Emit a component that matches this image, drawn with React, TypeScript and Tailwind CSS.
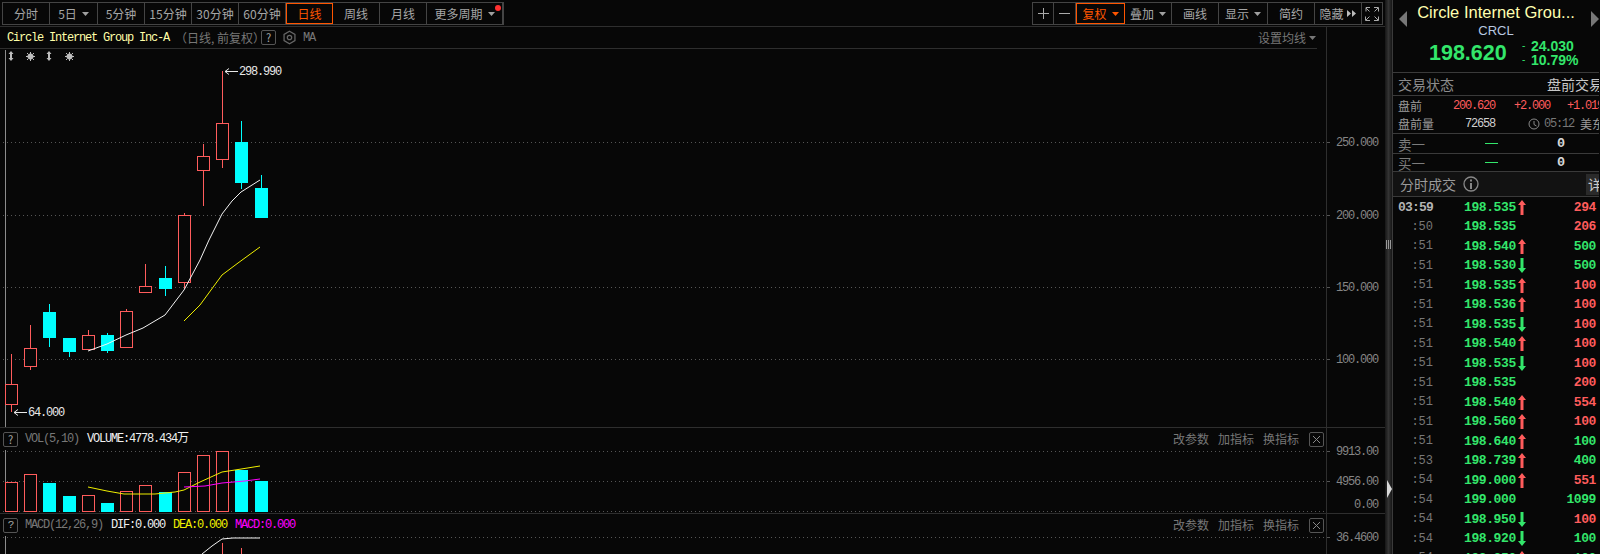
import React from 'react';

const RED = '#ff5c5c';
const CYAN = '#00ffff';
const MONO = '"Liberation Mono", "Noto Sans CJK SC", monospace';

const leftTabs = [
  { label: '分时', w: 'w-[47px]' },
  { label: '5日', w: 'w-[48px]', caret: true },
  { label: '5分钟', w: 'w-[47px]' },
  { label: '15分钟', w: 'w-[47px]' },
  { label: '30分钟', w: 'w-[47px]' },
  { label: '60分钟', w: 'w-[47px]' },
  { label: '日线', w: 'w-[47px]', active: true },
  { label: '周线', w: 'w-[47px]' },
  { label: '月线', w: 'w-[47px]' },
  { label: '更多周期', w: 'w-[76px]', caret: true, dot: true },
];

const rightTabs = [
  { label: '复权', w: 'w-[49px]', caret: true, active: true },
  { label: '叠加', w: 'w-[47px]', caret: true },
  { label: '画线', w: 'w-[47px]' },
  { label: '显示', w: 'w-[49px]', caret: true },
  { label: '简约', w: 'w-[47px]' },
];

// x = left edge of the 13px body
const candles = [
  { x: 5, up: true, top: 384, bot: 404, hi: 354, lo: 412 },
  { x: 24, up: true, top: 348, bot: 366, hi: 325, lo: 370 },
  { x: 43, up: false, top: 312, bot: 337, hi: 304, lo: 347 },
  { x: 63, up: false, top: 338, bot: 351, hi: 338, lo: 357 },
  { x: 82, up: true, top: 335, bot: 349, hi: 330, lo: 349 },
  { x: 101, up: false, top: 335, bot: 350, hi: 333, lo: 353 },
  { x: 120, up: true, top: 311, bot: 347, hi: 309, lo: 347 },
  { x: 139, up: true, top: 286, bot: 292, hi: 264, lo: 293 },
  { x: 159, up: false, top: 278, bot: 288, hi: 266, lo: 296 },
  { x: 178, up: true, top: 215, bot: 282, hi: 213, lo: 289 },
  { x: 197, up: true, top: 156, bot: 170, hi: 144, lo: 206 },
  { x: 216, up: true, top: 123, bot: 159, hi: 71, lo: 168 },
  { x: 235, up: false, top: 142, bot: 182, hi: 121, lo: 189 },
  { x: 255, up: false, top: 188, bot: 217, hi: 175, lo: 218 },
];

const volumes = [482, 474, 483, 496, 495, 503, 491, 485, 492, 472, 455, 451, 470, 481];

const ma5 = '88,351 107,344 126,335 143,328 165,315 184,290 200,260 209,240 222,214 232,201 241,192 260,180';
const ma10 = '184,321 200,305 222,275 238,263 260,247';
const volMa5 = '88,487 107,491 124,494 155,494 175,492 184,490 200,482 222,472 235,470 260,466';
const volMa10 = '184,487 205,486 222,483 245,481 260,479';

const ticks = [
  { time: '03:59', price: '198.535', dir: 'up', vol: '294', red: true },
  { time: ':50', price: '198.535', dir: '', vol: '206', red: true },
  { time: ':51', price: '198.540', dir: 'up', vol: '500', red: false },
  { time: ':51', price: '198.530', dir: 'down', vol: '500', red: false },
  { time: ':51', price: '198.535', dir: 'up', vol: '100', red: true },
  { time: ':51', price: '198.536', dir: 'up', vol: '100', red: true },
  { time: ':51', price: '198.535', dir: 'down', vol: '100', red: true },
  { time: ':51', price: '198.540', dir: 'up', vol: '100', red: true },
  { time: ':51', price: '198.535', dir: 'down', vol: '100', red: true },
  { time: ':51', price: '198.535', dir: '', vol: '200', red: true },
  { time: ':51', price: '198.540', dir: 'up', vol: '554', red: true },
  { time: ':51', price: '198.560', dir: 'up', vol: '100', red: true },
  { time: ':51', price: '198.640', dir: 'up', vol: '100', red: false },
  { time: ':53', price: '198.739', dir: 'up', vol: '400', red: false },
  { time: ':54', price: '199.000', dir: 'up', vol: '551', red: true },
  { time: ':54', price: '199.000', dir: '', vol: '1099', red: false },
  { time: ':54', price: '198.950', dir: 'down', vol: '100', red: true },
  { time: ':54', price: '198.920', dir: 'down', vol: '100', red: false },
  { time: ':54', price: '198.850', dir: 'up', vol: '100', red: false },
];

const Caret = ({ color = '#a0a0a0' }: { color?: string }) => (
  <svg width="7" height="4" viewBox="0 0 7 4" className="shrink-0">
    <path d="M0 0h7L3.5 4z" fill={color} />
  </svg>
);

const Tab = ({ tab }: { tab: { label: string; w: string; caret?: boolean; active?: boolean; dot?: boolean } }) => (
  <div
    className={`relative flex h-full items-center justify-center gap-[5px] border-r text-[12px] ${tab.w} ${
      tab.active ? 'border border-[#ff5500] text-[#ff5500]' : 'border-[#444] text-[#a6a6a6]'
    }`}
  >
    <span>{tab.label}</span>
    {tab.caret && <Caret color={tab.active ? '#ff5500' : '#a0a0a0'} />}
    {tab.dot && <span className="absolute right-[1px] top-[2px] h-[6px] w-[6px] rounded-full bg-[#ff3030]" />}
  </div>
);

const HelpBox = () => (
  <span className="flex h-[15px] w-[15px] shrink-0 items-center justify-center rounded-[2px] border border-[#555] text-[11px] text-[#aaa]">?</span>
);

const PanelActions = () => (
  <div className="flex items-center text-[12px] text-[#777]">
    <span className="mr-[9px]">改参数</span>
    <span className="mr-[9px]">加指标</span>
    <span className="mr-[10px]">换指标</span>
    <span className="flex h-[15px] w-[15px] items-center justify-center rounded-[2px] border border-[#555]">
      <svg width="9" height="9" viewBox="0 0 9 9">
        <path d="M1 1l7 7M8 1L1 8" stroke="#888" strokeWidth="1" />
      </svg>
    </span>
  </div>
);

const Dotted = ({ y, x2 = 1326 }: { y: number; x2?: number }) => (
  <line x1={3} x2={x2} y1={y + 0.5} y2={y + 0.5} stroke="#555" strokeDasharray="1 3" shapeRendering="crispEdges" />
);

const Axis = ({ top, height, labels }: { top: number; height: number; labels: { y: number; text: string; tick?: boolean }[] }) => (
  <svg width={57} height={height} viewBox={`1327 ${top} 57 ${height}`} className="shrink-0">
    {labels.map(l => (
      <g key={l.text}>
        {l.tick !== false && <line x1={1327} x2={1330} y1={l.y + 0.5} y2={l.y + 0.5} stroke="#555" shapeRendering="crispEdges" />}
        <text x={1378} y={l.y + 4} textAnchor="end" fontFamily={MONO} fontSize="12" letterSpacing="-1.2" fill="#858585">
          {l.text}
        </text>
      </g>
    ))}
  </svg>
);

const PriceChart = () => (
  <svg width={1326} height={378} viewBox="0 49 1326 378" className="block">
    {[142, 215, 287, 359].map(y => (
      <Dotted key={y} y={y} />
    ))}
    <rect x={5} y={50} width={1} height={377} fill="#8c8c8c" />
    {/* top-left markers */}
    {[11, 49].map(x => (
      <path key={x} d={`M${x} 51l2.5 3h-1.5v4h1.5l-2.5 3-2.5-3h1.5v-4h-1.5z`} fill="#bdbdbd" />
    ))}
    {[30, 69].map(x => (
      <g key={x} fill="#bdbdbd">
        <circle cx={x + 0.5} cy={56.5} r={3} />
        <path d={`M${x} 52h1v9h-1zM${x - 4} 56h9v1h-9z`} />
        <path d={`M${x - 3} 53h1v1h-1zM${x + 3} 53h1v1h-1zM${x - 3} 59h1v1h-1zM${x + 3} 59h1v1h-1z`} />
      </g>
    ))}
    <g shapeRendering="crispEdges">
      {candles.map(c => {
        const color = c.up ? RED : CYAN;
        const mid = c.x + 6.5;
        return (
          <g key={c.x}>
            <line x1={mid} x2={mid} y1={c.hi} y2={c.lo} stroke={color} />
            {c.up ? (
              <rect x={c.x + 0.5} y={c.top + 0.5} width={12} height={c.bot - c.top} fill="#070707" stroke={color} />
            ) : (
              <rect x={c.x} y={c.top} width={13} height={c.bot - c.top + 1} fill={color} />
            )}
          </g>
        );
      })}
    </g>
    <polyline points={ma5} fill="none" stroke="#f2f2f2" strokeWidth="1" />
    <polyline points={ma10} fill="none" stroke="#f0f000" strokeWidth="1" />
    <g stroke="#e8e8e8" fill="none">
      <path d="M225 71.5h13M229 68.5l-4 3 4 3" />
      <path d="M14 412.5h13M18 409.5l-4 3 4 3" />
    </g>
    <text x={239} y={75} fontFamily={MONO} fontSize="12" letterSpacing="-1.2" fill="#e8e8e8">298.990</text>
    <text x={28} y={416} fontFamily={MONO} fontSize="12" letterSpacing="-1.2" fill="#e8e8e8">64.000</text>
  </svg>
);

const VolumeChart = () => (
  <svg width={1326} height={63} viewBox="0 450 1326 63" className="block">
    <Dotted y={451} />
    <Dotted y={481} />
    <Dotted y={511} />
    <rect x={5} y={450} width={1} height={62} fill="#8c8c8c" />
    <g shapeRendering="crispEdges">
      {candles.map((c, i) =>
        c.up ? (
          <rect key={c.x} x={c.x + 0.5} y={volumes[i] + 0.5} width={12} height={511 - volumes[i]} fill="#070707" stroke={RED} />
        ) : (
          <rect key={c.x} x={c.x} y={volumes[i]} width={13} height={512 - volumes[i]} fill={CYAN} />
        ),
      )}
    </g>
    <polyline points={volMa5} fill="none" stroke="#f0f000" />
    <polyline points={volMa10} fill="none" stroke="#ff00ff" />
  </svg>
);

const MacdChart = () => (
  <svg width={1326} height={18} viewBox="0 536 1326 18" className="block">
    <Dotted y={537} />
    <rect x={5} y={536} width={1} height={18} fill="#8c8c8c" />
    <polyline points="202,554 212,546 222,539 233,538 260,538" fill="none" stroke="#f2f2f2" />
    <g stroke={RED} shapeRendering="crispEdges">
      <line x1={222.5} x2={222.5} y1={543} y2={554} />
      <line x1={241.5} x2={241.5} y1={548} y2={554} />
    </g>
  </svg>
);

const TickArrow = ({ dir }: { dir: string }) => {
  if (dir === 'up') {
    return (
      <svg width="8" height="15" viewBox="0 0 8 15" className="shrink-0">
        <path d="M4 0l4 5H5.500v10h-3V5H0z" fill={RED} />
      </svg>
    );
  }
  if (dir === 'down') {
    return (
      <svg width="8" height="15" viewBox="0 0 8 15" className="shrink-0">
        <path d="M4 15l4-5H5.500V0h-3v10H0z" fill="#33e66b" />
      </svg>
    );
  }
  return <span className="w-[8px] shrink-0" />;
};

const SideRow = ({ className, children }: { className: string; children: React.ReactNode }) => (
  <div className={`flex shrink-0 items-center whitespace-nowrap border-b border-[#3a3a3a] ${className}`}>{children}</div>
);

const QuotePanel = () => (
  <div className="flex w-[207px] shrink-0 flex-col overflow-hidden border-l border-[#3a3a3a] bg-[#070707]">
    <div className="relative flex h-[73px] shrink-0 flex-col items-center border-b border-[#3a3a3a]">
      <svg width="8" height="16" viewBox="0 0 8 16" className="absolute left-[6px] top-[11px]">
        <path d="M8 0v16L0 8z" fill="#777" />
      </svg>
      <svg width="8" height="16" viewBox="0 0 8 16" className="absolute right-0 top-[11px]">
        <path d="M0 0v16l8-8z" fill="#777" />
      </svg>
      <div className="pt-[2px] font-['Liberation_Sans',sans-serif] text-[16.5px] leading-[20px] text-[#ffffb0]">Circle Internet Grou...</div>
      <div className="mt-[1px] font-['Liberation_Sans',sans-serif] text-[13px] leading-[15px] text-[#b8c8e0]">CRCL</div>
      <div className="mt-[1px] flex items-center self-start pl-[36px]">
        <span className="w-[93px] font-['Liberation_Sans',sans-serif] text-[21.5px] font-bold leading-[28px] text-[#33e66b]">198.620</span>
        <div className="flex flex-col text-[#33e66b]">
          {['24.030', '10.79%'].map(v => (
            <div key={v} className="flex w-[60px] items-center font-['Liberation_Sans',sans-serif] text-[14px] font-bold leading-[14px]">
              <span className="w-[9px] text-[10px] font-normal">-</span>
              <span>{v}</span>
            </div>
          ))}
        </div>
      </div>
    </div>
    <SideRow className="h-[23px] justify-between pl-[5px] text-[14px] text-[#8c8c8c]">
      <span>交易状态</span>
      <span className="mr-[-4px] text-[#c8c8c8]">盘前交易</span>
    </SideRow>
    <div className="flex h-[38px] shrink-0 flex-col border-b border-[#3a3a3a] pl-[5px] text-[12px] leading-[18px]">
      <div className="flex h-[20px] items-center whitespace-nowrap text-[#9a9a9a]">
        <span className="w-[55px] shrink-0">盘前</span>
        <span className="w-[61px] shrink-0" style={{ fontFamily: MONO, letterSpacing: '-1.2px', color: RED }}>200.620</span>
        <span className="w-[53px] shrink-0" style={{ fontFamily: MONO, letterSpacing: '-1.2px', color: RED }}>+2.000</span>
        <span className="shrink-0" style={{ fontFamily: MONO, letterSpacing: '-1.2px', color: RED }}>+1.019</span>
      </div>
      <div className="flex h-[18px] items-center whitespace-nowrap text-[#9a9a9a]">
        <span className="w-[67px] shrink-0">盘前量</span>
        <span className="w-[63px] shrink-0 text-[#d0d0d0]" style={{ fontFamily: MONO, letterSpacing: '-1.2px' }}>72658</span>
        <svg width="12" height="12" viewBox="0 0 12 12" className="mr-[4px] shrink-0">
          <circle cx="6" cy="6" r="5" fill="none" stroke="#888" />
          <path d="M6 3v3.500l2.500 1.500" fill="none" stroke="#888" />
        </svg>
        <span className="mr-[6px] shrink-0 text-[#777]" style={{ fontFamily: MONO, letterSpacing: '-1.2px' }}>05:12</span>
        <span className="shrink-0">美东</span>
      </div>
    </div>
    {['卖一', '买一'].map((label, i) => (
      <SideRow key={label} className={`${i === 0 ? 'h-[20px]' : 'h-[18px]'} pl-[5px] text-[13.5px] leading-[16px] text-[#7c7c7c]`}>
        <span className="w-[87px] shrink-0">{label}</span>
        <span className="h-[1px] w-[13px] shrink-0 bg-[#33e66b]" />
        <span className="ml-[59px] text-[#d8d8d8]" style={{ fontFamily: MONO, fontWeight: 700 }}>0</span>
      </SideRow>
    ))}
    <SideRow className="h-[25px] bg-[#121212] pl-[7px] text-[14px] text-[#9a9a9a]">
      <span className="w-[63px] shrink-0">分时成交</span>
      <svg width="16" height="16" viewBox="0 0 16 16" className="shrink-0">
        <circle cx="8" cy="8" r="7" fill="none" stroke="#888" strokeWidth="1.300" />
        <path d="M7 3.500h2v2H7zM7 7h2v6H7z" fill="#888" />
      </svg>
      <span className="ml-[107px] shrink-0 bg-[#2a2a2a] pl-[2px] text-[#c8c8c8]">详</span>
    </SideRow>
    <div className="flex flex-col pt-[0.5px]" style={{ fontFamily: MONO }}>
      {ticks.map((row, i) => (
        <div key={i} className="flex h-[19.5px] shrink-0 items-center pr-[3px]">
          <span className={`w-[40px] text-right ${i === 0 ? 'text-[13px] font-bold tracking-[-0.8px] text-[#b4b4b4]' : 'text-[12px] text-[#777]'}`}>{row.time}</span>
          <span className="ml-[31px] w-[52px] text-[13px] font-bold tracking-[-0.4px] text-[#33e66b]">{row.price}</span>
          <span className="ml-[1px] flex w-[10px] justify-center">
            <TickArrow dir={row.dir} />
          </span>
          <span className={`ml-auto text-[13px] font-bold tracking-[-0.4px] ${row.red ? 'text-[#ff5c5c]' : 'text-[#33e66b]'}`}>{row.vol}</span>
        </div>
      ))}
    </div>
  </div>
);

const App: React.FC = () => {
  return (
    <div className="flex h-[554px] w-[1600px] overflow-hidden bg-[#070707] font-['Noto_Sans_CJK_SC',sans-serif]">
      <div className="flex w-[1385px] shrink-0 flex-col">
        {/* toolbar */}
        <div className="flex h-[27px] shrink-0 justify-between border-b border-[#2e2e2e] pl-[2px] pr-[2px] pt-[2px]">
          <div className="mb-[1px] flex border border-[#444]">
            {leftTabs.map(tab => (
              <Tab key={tab.label} tab={tab} />
            ))}
          </div>
          <div className="mb-[1px] flex border border-[#444]">
            <div className="flex h-full w-[21px] items-center justify-center border-r border-[#444]">
              <svg width="11" height="11" viewBox="0 0 11 11">
                <path d="M5 0h1v11H5zM0 5h11v1H0z" fill="#aaa" />
              </svg>
            </div>
            <div className="flex h-full w-[22px] items-center justify-center border-r border-[#444]">
              <span className="h-[1px] w-[11px] bg-[#aaa]" />
            </div>
            {rightTabs.map(tab => (
              <Tab key={tab.label} tab={tab} />
            ))}
            <div className="flex w-[47px] items-center justify-center gap-[3px] border-r border-[#444] text-[12px] text-[#a6a6a6]">
              <span>隐藏</span>
              <svg width="10" height="7" viewBox="0 0 10 7">
                <path d="M0 0l4 3.500L0 7zM5 0l4 3.500L5 7z" fill="#bbb" />
              </svg>
            </div>
            <div className="flex w-[20px] items-center justify-center">
              <svg width="14" height="14" viewBox="0 0 14 14" fill="none" stroke="#aaa">
                <path d="M1 4.500V.5h4M9 .5h4.500v4M13.500 9.500v4H9M5 13.500H.5V9.500M1 1l3.500 3.500M13 1L9.500 4.500M13 13L9.500 9.500M1 13l3.500-3.500" />
              </svg>
            </div>
          </div>
        </div>

        {/* price panel */}
        <div className="flex h-[401px] shrink-0 border-b border-[#2e2e2e]">
          <div className="w-[1327px] shrink-0 border-r border-[#2e2e2e]">
            <div className="mr-[9px] flex h-[22px] items-center justify-between border-b border-[#2e2e2e] pl-[7px] pr-[1px] text-[12px]">
              <div className="flex items-center gap-[6px]">
                <span className="text-[#ffffa8]" style={{ fontFamily: MONO, letterSpacing: '-1.2px' }}>Circle Internet Group Inc-A</span>
                <span className="w-[80px] shrink-0 whitespace-nowrap text-[#777]">（日线, 前复权）</span>
                <HelpBox />
                <svg width="15" height="15" viewBox="0 0 24 24" fill="none" stroke="#666" strokeWidth="2">
                  <path d="M12 2l8.700 5v10L12 22l-8.700-5V7z" />
                  <circle cx="12" cy="12" r="3.500" />
                </svg>
                <span className="text-[#777]" style={{ fontFamily: MONO, letterSpacing: '-1.2px' }}>MA</span>
              </div>
              <div className="flex items-center gap-[3px] text-[#777]">
                <span>设置均线</span>
                <Caret color="#777" />
              </div>
            </div>
            <PriceChart />
          </div>
          <Axis
            top={27}
            height={400}
            labels={[
              { y: 142, text: '250.000' },
              { y: 215, text: '200.000' },
              { y: 287, text: '150.000' },
              { y: 359, text: '100.000' },
            ]}
          />
        </div>

        {/* volume panel */}
        <div className="flex h-[86px] shrink-0 border-b border-[#2e2e2e]">
          <div className="w-[1327px] shrink-0 border-r border-[#2e2e2e]">
            <div className="flex h-[22px] items-center justify-between pl-[3px] pr-[2px] text-[12px]">
              <div className="flex items-center">
                <HelpBox />
                <span className="ml-[7px] w-[62px] text-[#777]" style={{ fontFamily: MONO, letterSpacing: '-1.2px' }}>VOL(5,10)</span>
                <span className="text-[#f0f0f0]" style={{ fontFamily: MONO, letterSpacing: '-1.2px' }}>VOLUME:4778.434万</span>
              </div>
              <PanelActions />
            </div>
            <VolumeChart />
          </div>
          <Axis
            top={428}
            height={85}
            labels={[
              { y: 451, text: '9913.00' },
              { y: 481, text: '4956.00' },
              { y: 504, text: '0.00', tick: false },
            ]}
          />
        </div>

        {/* macd panel */}
        <div className="flex min-h-0 flex-1">
          <div className="w-[1327px] shrink-0 border-r border-[#2e2e2e]">
            <div className="flex h-[22px] items-center justify-between pl-[3px] pr-[2px] text-[12px]">
              <div className="flex items-center" style={{ fontFamily: MONO, letterSpacing: '-1.2px' }}>
                <HelpBox />
                <span className="ml-[7px] w-[86px] text-[#777]">MACD(12,26,9)</span>
                <span className="w-[62px] text-[#f0f0f0]">DIF:0.000</span>
                <span className="w-[62px] text-[#f0f000]">DEA:0.000</span>
                <span className="text-[#ff00ff]">MACD:0.000</span>
              </div>
              <PanelActions />
            </div>
            <MacdChart />
          </div>
          <Axis top={514} height={40} labels={[{ y: 537, text: '36.4600' }]} />
        </div>
      </div>

      {/* splitter */}
      <div className="flex w-[7px] shrink-0 flex-col items-center bg-gradient-to-r from-[#161616] via-[#333] to-[#161616] pt-[240px]">
        <div className="h-[9px] w-[5px] bg-[repeating-linear-gradient(90deg,#999_0,#999_1px,transparent_1px,transparent_2px)]" />
        <svg width="5" height="18" viewBox="0 0 5 18" className="ml-[1px] mt-[231px]">
          <path d="M0 0l5 9-5 9z" fill="#d8d8d8" />
        </svg>
      </div>

      <QuotePanel />
    </div>
  );
};

export default App;
